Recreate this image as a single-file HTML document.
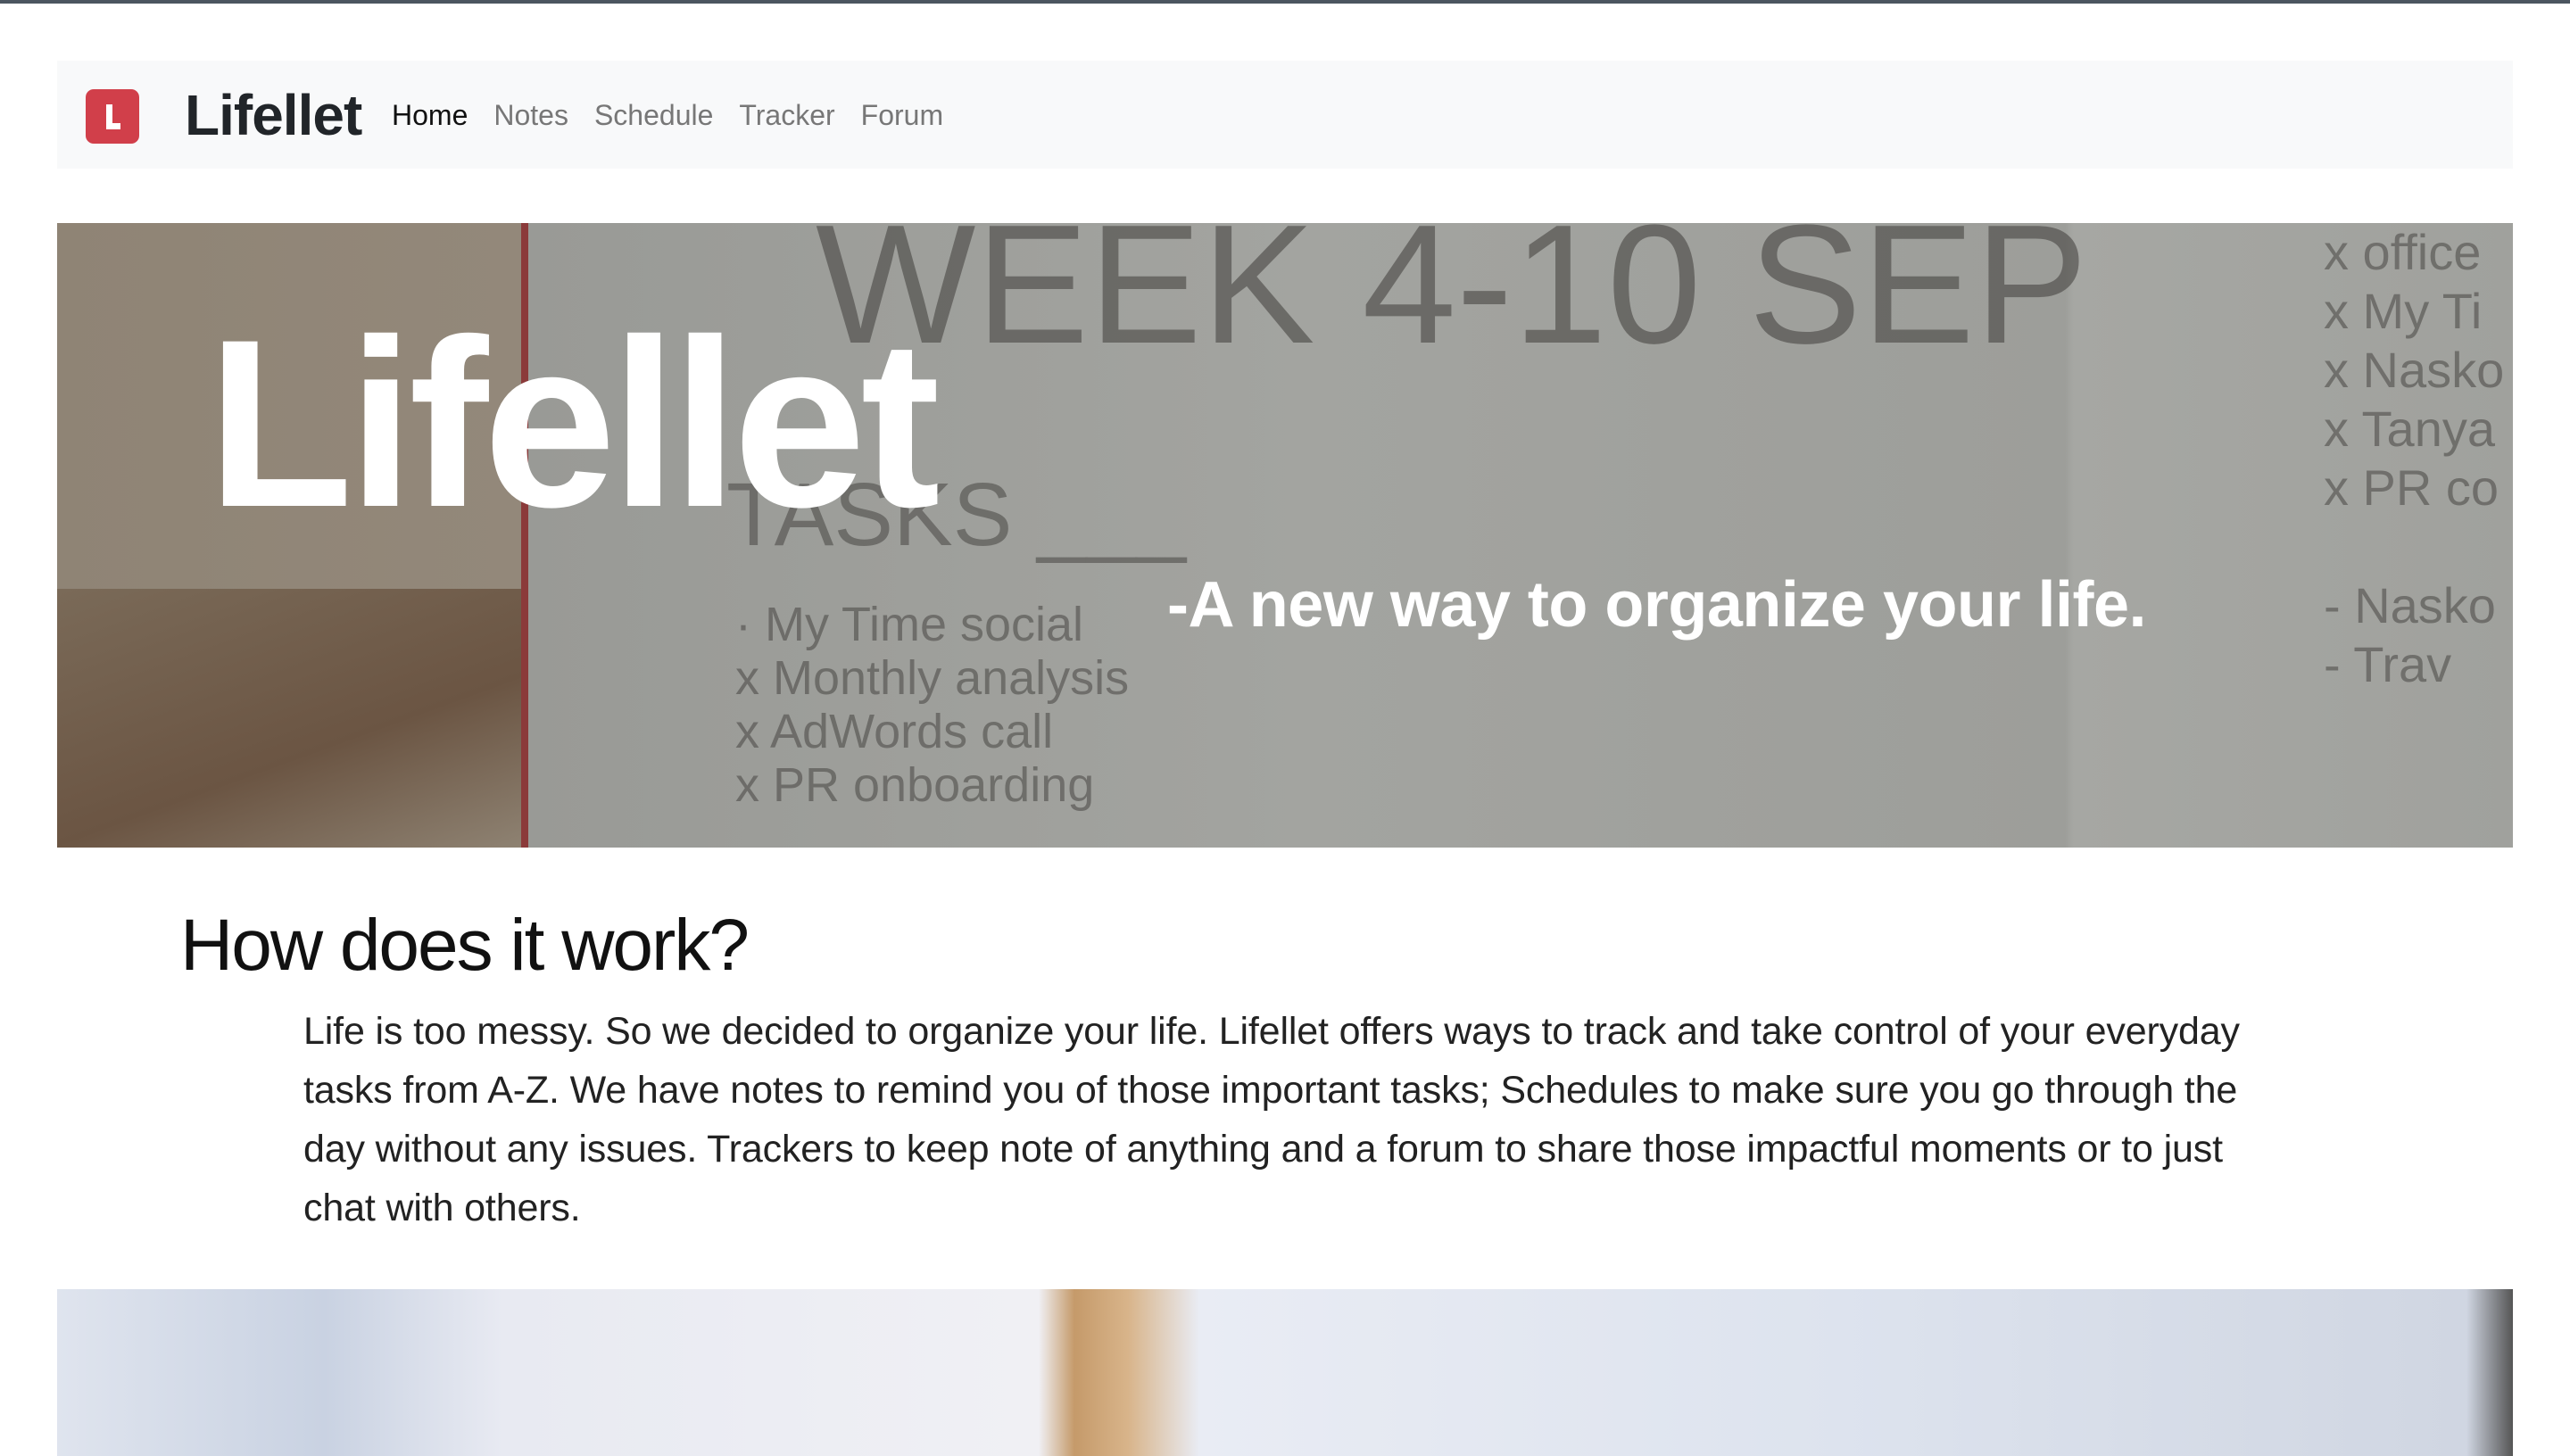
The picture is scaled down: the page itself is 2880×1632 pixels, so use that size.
<!DOCTYPE html>
<html><head><meta charset="utf-8"><style>
*{margin:0;padding:0;box-sizing:border-box}
body{width:2880px;height:1628px;overflow:hidden;background:#fff;font-family:"Liberation Sans",sans-serif;position:relative;border-top:4px solid #4c5660}
.nav{position:absolute;left:64px;top:64px;width:2752px;height:121px;background:#f8f9fa}
.logo{position:absolute;left:32px;top:32px;width:60px;height:61px;background:#d13f4a;border-radius:9px}
.logo:before{content:"";position:absolute;left:23px;top:17px;width:7px;height:28px;background:#fff}
.logo:after{content:"";position:absolute;left:23px;top:38px;width:16px;height:7px;background:#fff}
.brand{position:absolute;left:143px;top:24px;font-size:64px;font-weight:bold;color:#212529;letter-spacing:-1px}
.links{position:absolute;left:375px;top:43px;font-size:32px;color:#777}
.links span{margin-right:29px}
.links span:first-child{color:#111}
.hero{position:absolute;left:64px;top:246px;width:2752px;height:700px;overflow:hidden;
background:linear-gradient(90deg,#8f8475 0,#93887a 520px,#8b3a3a 520px,#8b3a3a 528px,#999a96 528px,#a3a4a0 1400px,#9d9e9a 2250px,#a6a7a3 2260px,#a0a19d 2752px)}
.wood{position:absolute;left:0;top:410px;width:520px;height:290px;background:linear-gradient(160deg,#7a6a58 0,#6b5543 60%,#8e8272 100%)}
.h1{position:absolute;left:168px;top:70px;font-size:268px;font-weight:bold;color:#fff;letter-spacing:-6px}
.sub{position:absolute;left:1244px;top:387px;font-size:72px;font-weight:bold;color:#fff;letter-spacing:-.5px}
.hw{position:absolute;color:#3f3d3a;font-family:"Liberation Sans",sans-serif}
h2{position:absolute;left:202px;top:1009px;font-size:82px;font-weight:normal;color:#111;letter-spacing:-2px}
p{position:absolute;left:340px;top:1119px;width:2220px;font-size:43px;letter-spacing:-.15px;line-height:66px;color:#222}
.img2{position:absolute;left:64px;top:1441px;width:2752px;height:187px;background:linear-gradient(90deg,#dfe4ee 0,#c9d2e2 300px,#e8eaf2 500px,#f0f0f4 1100px,#c59a6a 1140px,#d8b48a 1200px,#e9ecf4 1280px,#dde3ee 2000px,#d0d6e2 2700px,#555 2752px)}
</style></head><body>
<div class="nav"><div class="logo"></div><div class="brand">Lifellet</div>
<div class="links"><span>Home</span><span>Notes</span><span>Schedule</span><span>Tracker</span><span>Forum</span></div></div>
<div class="hero"><div class="wood"></div>
<div class="hw" style="left:850px;top:-40px;font-size:190px;opacity:.55">WEEK 4-10 SEP</div>
<div class="hw" style="left:750px;top:270px;font-size:100px;opacity:.5">TASKS ___</div>
<div class="hw" style="left:760px;top:420px;font-size:54px;line-height:60px;opacity:.5">· My Time social<br>x Monthly analysis<br>x AdWords call<br>x PR onboarding</div>
<div class="hw" style="left:2540px;top:0;font-size:56px;line-height:66px;opacity:.5">x office<br>x My Ti<br>x Nasko<br>x Tanya<br>x PR co<br><br>- Nasko<br>- Trav</div>
<div class="h1">Lifellet</div>
<div class="sub">-A new way to organize your life.</div></div>
<h2>How does it work?</h2>
<p>Life is too messy. So we decided to organize your life. Lifellet offers ways to track and take control of your everyday tasks from A-Z. We have notes to remind you of those important tasks; Schedules to make sure you go through the day without any issues. Trackers to keep note of anything and a forum to share those impactful moments or to just chat with others.</p>
<div class="img2"></div>
</body></html>
